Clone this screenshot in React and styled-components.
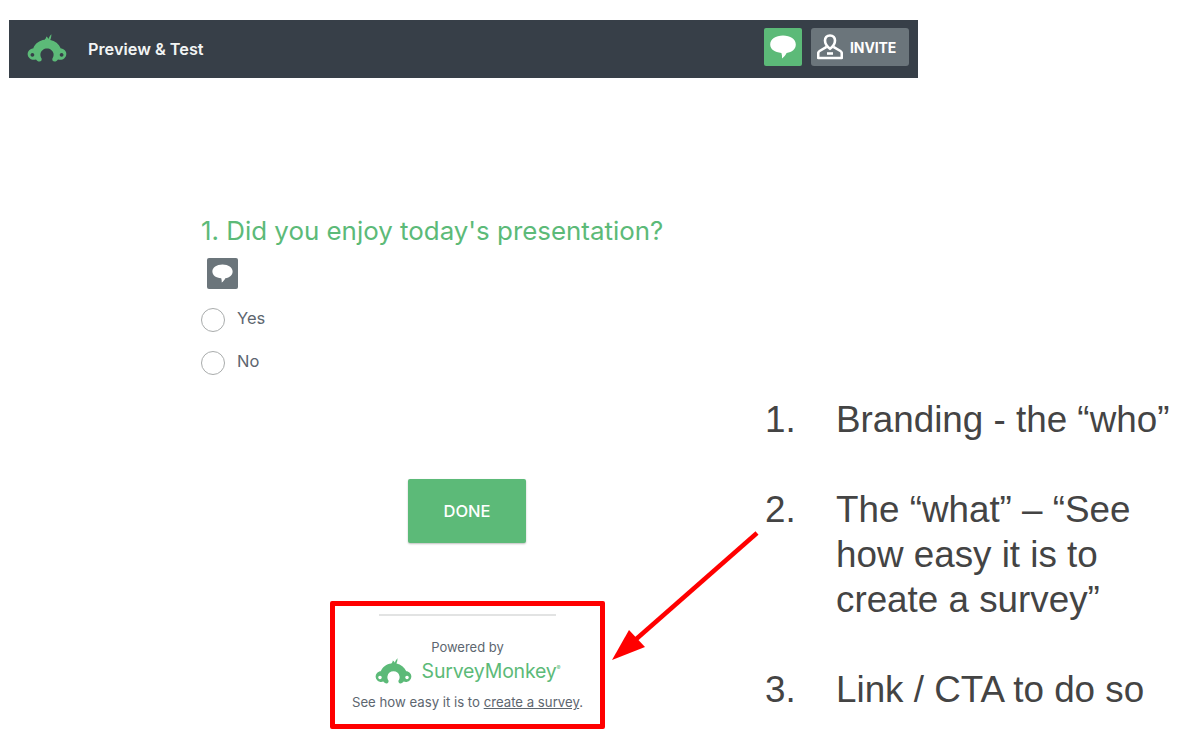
import React from "react"
import styled, { createGlobalStyle } from "styled-components"

const GREEN = "#5cba78"
const SLATE = "#6b757b"

const Global = createGlobalStyle`
  html, body {
    margin: 0;
    background: #fff;
  }
`

const Page = styled.div`
  position: relative;
  width: 1178px;
  height: 744px;
  overflow: hidden;
  font-family: Inter, "Liberation Sans", sans-serif;
`

const Header = styled.header`
  display: flex;
  align-items: center;
  width: 909px;
  height: 58px;
  margin: 20px 0 0 9px;
  padding: 0 9px 0 18px;
  box-sizing: border-box;
  background: #373f48;
`

const HeaderLogo = styled.div`
  display: flex;
  margin-bottom: 3px;
`

const HeaderTitle = styled.span`
  margin-left: 21px;
  font-size: 16.3px;
  font-weight: 600;
  color: #f2f4f4;
`

const HeaderActions = styled.div`
  display: flex;
  gap: 9px;
  margin: 0 0 4px auto;
`

const IconButton = styled.div`
  display: flex;
  align-items: center;
  justify-content: center;
  width: ${(p) => p.size}px;
  height: ${(p) => p.size}px;
  border-radius: 2px;
  background: ${(p) => p.color};
`

const InviteButton = styled.div`
  display: flex;
  align-items: center;
  gap: 7px;
  width: 98px;
  height: 38px;
  padding-left: 6px;
  box-sizing: border-box;
  border-radius: 3px;
  background: ${SLATE};
  font-size: 14px;
  font-weight: 700;
  letter-spacing: -0.1px;
  color: #fff;
`

const Body = styled.main`
  display: flex;
`

const Survey = styled.section`
  width: 532px;
  margin-left: 201px;
  padding-top: 136px;
`

const Question = styled.h2`
  margin: 0;
  font-size: 25.9px;
  line-height: 34px;
  font-weight: 400;
  white-space: nowrap;
  color: ${GREEN};
`

const CommentSlot = styled.div`
  margin: 10px 0 0 6px;
`

const Options = styled.div`
  display: flex;
  flex-direction: column;
  gap: 19px;
  margin-top: 19px;
`

const Option = styled.label`
  display: flex;
  gap: 12px;
  font-size: 16.5px;
  line-height: 20px;
  color: #5d666f;
`

const Radio = styled.span`
  width: 24px;
  height: 24px;
  box-sizing: border-box;
  border: 1.5px solid #a9acac;
  border-radius: 50%;
`

const DoneButton = styled.button`
  display: block;
  width: 118px;
  height: 64px;
  margin: 104px auto 0;
  border: 0;
  border-radius: 2px;
  background: ${GREEN};
  box-shadow: 0 1px 2px rgba(0, 0, 0, 0.25);
  font-family: inherit;
  font-size: 16.5px;
  font-weight: 500;
  color: #fff;
`

const PoweredBox = styled.footer`
  display: flex;
  flex-direction: column;
  align-items: center;
  width: 275px;
  height: 128px;
  margin: 58px 0 0 129px;
  padding-top: 8px;
  box-sizing: border-box;
  border: 5px solid #ff0000;
  border-radius: 2px;
`

const Rule = styled.div`
  width: 177px;
  height: 2px;
  background: #e2e3e3;
`

const PoweredBy = styled.div`
  margin-top: 23px;
  font-size: 13px;
  line-height: 17px;
  color: #5d666f;
`

const Brand = styled.div`
  display: flex;
  align-items: center;
  gap: 10px;
  margin-top: 1px;
  height: 28px;
`

const BrandName = styled.span`
  font-size: 19.5px;
  letter-spacing: -0.2px;
  color: ${GREEN};
  sup {
    font-size: 6px;
    vertical-align: 8px;
    line-height: 0;
  }
`

const Tagline = styled.div`
  margin-top: 9px;
  font-size: 13.2px;
  line-height: 17px;
  white-space: nowrap;
  color: #5d666f;
  a {
    color: inherit;
    text-decoration: underline;
  }
`

const Specks = styled.div`
  display: flex;
  gap: 188px;
  margin: 11px 0 0 171px;
  span {
    width: 3px;
    height: 1px;
    background: #c4c4c4;
  }
`

const Notes = styled.ol`
  width: 414px;
  margin: 319px 0 0 32px;
  padding: 0;
  list-style: none;
  font-family: "Liberation Sans", Arial, sans-serif;
  font-size: 36.8px;
  line-height: 45px;
  white-space: nowrap;
  color: #444;
`

const Note = styled.li`
  display: flex;
  margin-bottom: 45px;
  b {
    flex: none;
    width: 71px;
    font-weight: 400;
  }
`

const Arrow = styled.svg`
  position: absolute;
  left: 600px;
  top: 520px;
`

const Monkey = ({ width, height }) => (
  <svg width={width} height={height} viewBox="0 0 40 28">
    <path
      fill={GREEN}
      fillRule="evenodd"
      d="M12.5 27.5 C11 27.5 9.8 26.5 9 25.4 C6.6 26.2 4.4 25.8 2.6 24.2 C0.2 22 0 18.4 2.2 16.2 C3.4 15 5 14.4 6.2 14.4 C8.2 9.4 12.4 6.4 17.6 5.8 C18.4 5 19.2 4.4 19.2 2.6 C20.4 3.2 21 4 21.4 5 C22 3.2 23 1.4 24.4 0.2 C24.4 2.4 24 4.2 23.2 6 C28 7 31.8 9.8 33.8 14.4 C35 14.4 36.6 15 37.8 16.2 C40 18.4 39.8 22 37.4 24.2 C35.6 25.8 33.4 26.2 31 25.4 C30.2 26.5 29 27.5 27.5 27.5 C25.9 27.5 25 26.2 25.4 24.4 C26.2 23.4 26.9 21.6 26.5 19.6 C25.9 16.4 23.2 14.4 20 14.4 C16.8 14.4 14.1 16.4 13.5 19.6 C13.1 21.6 13.8 23.4 14.6 24.4 C15 26.2 14.1 27.5 12.5 27.5 Z M5.4 19 A1.9 1.9 0 1 0 5.41 19 Z M34.6 19 A1.9 1.9 0 1 0 34.61 19 Z"
    />
  </svg>
)

const Bubble = ({ width, height }) => (
  <svg width={width} height={height} viewBox="0 0 26 24">
    <path
      fill="#fff"
      d="M13 0.6 C20.4 0.6 25.8 4.2 25.8 9.6 C25.8 14.2 22 17.4 16.6 18 C15.6 20 14 22.2 12 23.4 C12.2 21.6 12 19.8 11.4 18 C4.8 17.6 0.2 14.4 0.2 9.6 C0.2 4.2 5.6 0.6 13 0.6 Z"
    />
  </svg>
)

const Person = () => (
  <svg width="26" height="26" viewBox="0 0 26 26" fill="none" stroke="#fff" strokeWidth="2.6" strokeLinejoin="round">
    <path d="M13 1.5 C9.8 1.5 8 3.8 8 6.6 C8 9.6 10 12.6 13 14.8 C16 12.6 18 9.6 18 6.6 C18 3.8 16.2 1.5 13 1.5 Z" />
    <path d="M9.6 12.8 L2.6 17 C1.6 17.6 1.2 18.6 1.2 19.6 V24 H24.8 V19.6 C24.8 18.6 24.4 17.6 23.4 17 L16.4 12.8" />
    <path d="M10 19.5 H16" />
  </svg>
)

const App = () => {
  return (
    <Page>
      <Global />
      <Header>
        <HeaderLogo>
          <Monkey width={40} height={28} />
        </HeaderLogo>
        <HeaderTitle>Preview &amp; Test</HeaderTitle>
        <HeaderActions>
          <IconButton size={38} color={GREEN}>
            <Bubble width={26} height={24} />
          </IconButton>
          <InviteButton>
            <Person />
            INVITE
          </InviteButton>
        </HeaderActions>
      </Header>
      <Body>
        <Survey>
          <Question>1. Did you enjoy today's presentation?</Question>
          <CommentSlot>
            <IconButton size={31} color={SLATE}>
              <Bubble width={21} height={19} />
            </IconButton>
          </CommentSlot>
          <Options>
            <Option>
              <Radio />
              Yes
            </Option>
            <Option>
              <Radio />
              No
            </Option>
          </Options>
          <DoneButton>DONE</DoneButton>
          <PoweredBox>
            <Rule />
            <PoweredBy>Powered by</PoweredBy>
            <Brand>
              <Monkey width={37} height={26} />
              <BrandName>
                SurveyMonkey<sup>®</sup>
              </BrandName>
            </Brand>
            <Tagline>
              See how easy it is to <a href="#create">create a survey</a>.
            </Tagline>
          </PoweredBox>
          <Specks>
            <span />
            <span />
            <span />
          </Specks>
        </Survey>
        <Notes>
          <Note>
            <b>1.</b>
            <span>Branding - the “who”</span>
          </Note>
          <Note>
            <b>2.</b>
            <span>
              The “what” – “See
              <br />
              how easy it is to
              <br />
              create a survey”
            </span>
          </Note>
          <Note>
            <b>3.</b>
            <span>Link / CTA to do so</span>
          </Note>
        </Notes>
      </Body>
      <Arrow width="160" height="150" viewBox="0 0 160 150">
        <path d="M157 13 L34 121" stroke="#ff0000" strokeWidth="4.5" fill="none" />
        <path d="M12 140 L29 110 L45 127 Z" fill="#ff0000" />
      </Arrow>
    </Page>
  )
}

export default App
